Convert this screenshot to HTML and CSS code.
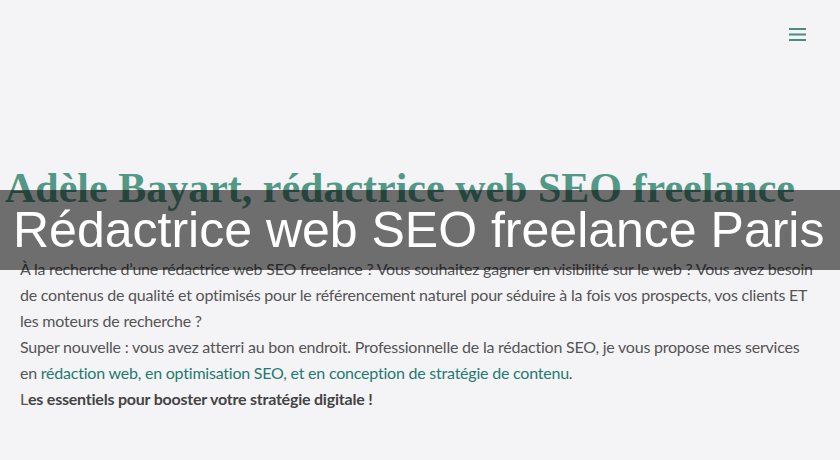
FILE: index.html
```html
<!DOCTYPE html>
<html lang="fr">
<head>
  <meta charset="UTF-8">
  <meta name="viewport" content="width=device-width, initial-scale=1.0">
  <title>Adèle Bayart, rédactrice web SEO freelance</title>
  <link rel="stylesheet" href="styles.css">
</head>
<body>
  <header class="site-header">
    <button class="menu-toggle" aria-label="Menu">
      <svg width="17" height="13" viewBox="0 0 17 13">
        <rect x="0" y="0" width="17" height="2" />
        <rect x="0" y="5.5" width="17" height="2" />
        <rect x="0" y="11" width="17" height="2" />
      </svg>
    </button>
  </header>

  <main class="content">
    <h1 class="page-title">Adèle Bayart, rédactrice web SEO freelance</h1>
    <p class="intro">
      À la recherche d’une rédactrice web SEO freelance ? Vous souhaitez gagner en visibilité sur le web ? Vous avez besoin de contenus de qualité et optimisés pour le référencement naturel pour séduire à la fois vos prospects, vos clients ET les moteurs de recherche ?<br>
      Super nouvelle : vous avez atterri au bon endroit. Professionnelle de la rédaction SEO, je vous propose mes services en <a href="#">rédaction web, en optimisation SEO, et en conception de stratégie de contenu</a>.<br>
      L<strong>es essentiels pour booster votre stratégie digitale !</strong>
    </p>
  </main>

  <div class="caption">Rédactrice web SEO freelance Paris</div>
</body>
</html>
```

FILE: styles.css
```css
body {
  margin: 0;
  background-color: #f4f3f6;
  font-family: Lato, "Open Sans", sans-serif;
  color: #555;
}

.site-header {
  display: flex;
  justify-content: flex-end;
  padding: 28px 34px 0 0;
  height: 132px;
}

.menu-toggle {
  border: none;
  background: none;
  padding: 0;
  width: 17px;
  height: 13px;
  cursor: pointer;
}

.menu-toggle svg {
  display: block;
  fill: #4a8c82;
}

.content {
  padding: 0 20px;
}

.page-title {
  margin: 0 0 0 -15px;
  font-family: "Liberation Serif", serif;
  font-weight: bold;
  font-size: 42px;
  line-height: 56px;
  color: #539886;
  white-space: nowrap;
}

.intro {
  margin: 40px 0 0;
  font-size: 16px;
  line-height: 26px;
  letter-spacing: -0.22px;
}

.intro a {
  color: #1f7a72;
  text-decoration: none;
}

.intro strong {
  font-weight: bold;
  color: #444;
}

.caption {
  position: absolute;
  left: 0;
  right: 0;
  top: 190px;
  height: 80px;
  display: flex;
  align-items: center;
  padding-left: 13px;
  background: rgba(0, 0, 0, 0.55);
  color: #fff;
  font-family: "Liberation Sans", Arial, sans-serif;
  font-size: 50px;
  white-space: nowrap;
}
```
